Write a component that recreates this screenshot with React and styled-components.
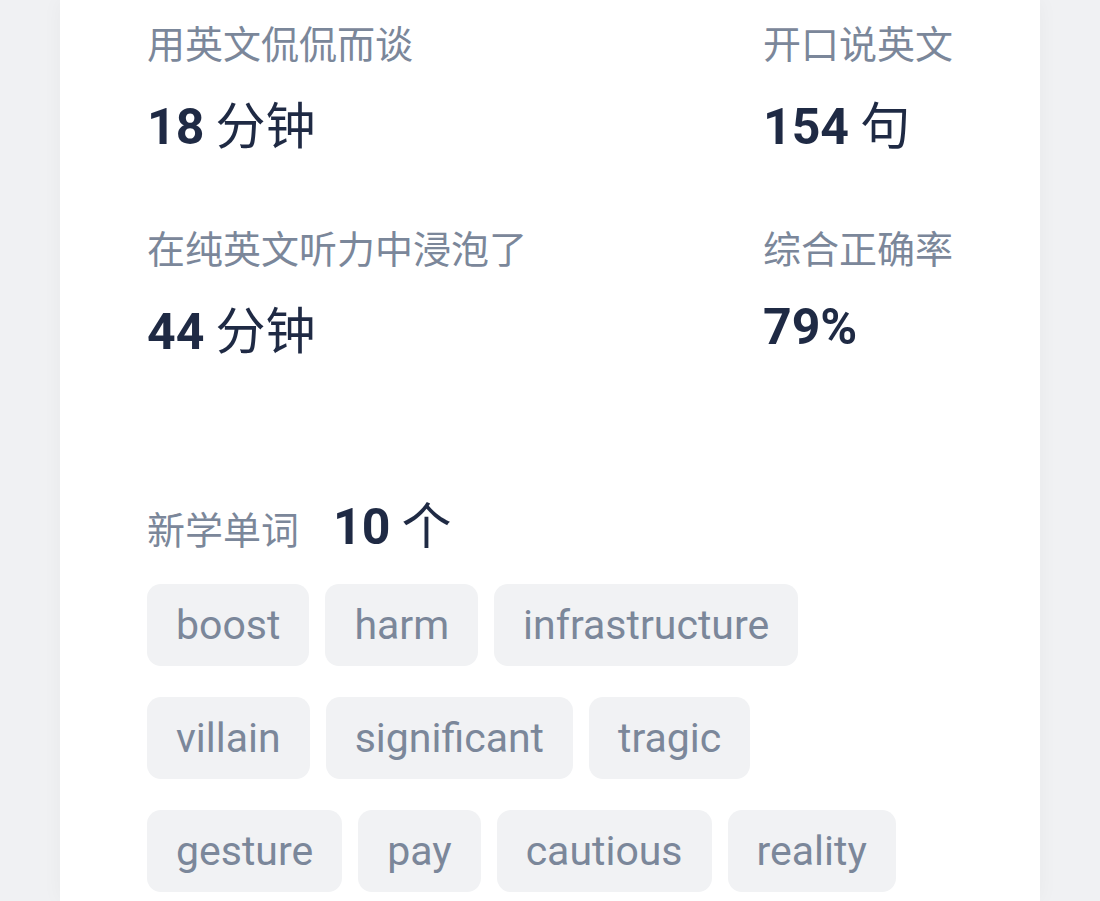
import React from "react";
import styled, { createGlobalStyle } from "styled-components";

const Global = createGlobalStyle`
  html, body { margin: 0; padding: 0; background: #f0f1f3; }
  body { font-family: Roboto, "Noto Sans CJK SC", sans-serif; }
`;

const Page = styled.div`
  min-height: 901px;
  padding: 0 60px;
  background: #f0f1f3;
`;

const Card = styled.div`
  background: #ffffff;
  min-height: 901px;
  padding: 15px 87px 0;
  box-sizing: border-box;
  box-shadow: 0 0 20px rgba(30, 40, 60, 0.04);
`;

const StatsRow = styled.div`
  display: flex;
  justify-content: space-between;
  margin-bottom: 63px;
`;

const Stat = styled.div`
  display: flex;
  flex-direction: column;
`;

const Label = styled.div`
  font-size: 38px;
  line-height: 54px;
  color: #7b879a;
  font-family: "Noto Sans CJK SC", sans-serif;
`;

const Value = styled.div`
  margin-top: 23px;
  font-size: 50px;
  line-height: 60px;
  color: #1f2a44;
  font-weight: 700;
  font-family: Roboto, "Noto Sans CJK SC", sans-serif;
`;

const Unit = styled.span`
  font-weight: 400;
  font-family: "Noto Sans CJK SC", sans-serif;
`;

const WordsHeader = styled.div`
  display: flex;
  align-items: baseline;
  margin-top: 130px;
  margin-bottom: 27px;
`;

const Count = styled.span`
  margin-left: 34px;
  font-size: 50px;
  line-height: 60px;
  font-weight: 700;
  color: #1f2a44;
`;

const Tags = styled.div`
  display: flex;
  flex-wrap: wrap;
  gap: 31px 16px;
`;

const Tag = styled.span`
  display: inline-flex;
  align-items: center;
  height: 82px;
  padding: 0 29px;
  border-radius: 14px;
  background: #f1f2f4;
  color: #7b879a;
  font-size: 41px;
  font-family: Roboto, sans-serif;
`;

const stats = [
  [
    { label: "用英文侃侃而谈", num: "18", unit: "分钟" },
    { label: "开口说英文", num: "154", unit: "句" },
  ],
  [
    { label: "在纯英文听力中浸泡了", num: "44", unit: "分钟" },
    { label: "综合正确率", num: "79%", unit: "" },
  ],
];

const words = [
  "boost", "harm", "infrastructure", "villain", "significant",
  "tragic", "gesture", "pay", "cautious", "reality",
];

export default function App() {
  return (
    <Page>
      <Global />
      <Card>
        {stats.map((row, i) => (
          <StatsRow key={i}>
            {row.map((s) => (
              <Stat key={s.label}>
                <Label>{s.label}</Label>
                <Value>
                  {s.num}
                  {s.unit && <Unit> {s.unit}</Unit>}
                </Value>
              </Stat>
            ))}
          </StatsRow>
        ))}
        <WordsHeader>
          <Label>新学单词</Label>
          <Count>
            10<Unit> 个</Unit>
          </Count>
        </WordsHeader>
        <Tags>
          {words.map((w) => (
            <Tag key={w}>{w}</Tag>
          ))}
        </Tags>
      </Card>
    </Page>
  );
}
